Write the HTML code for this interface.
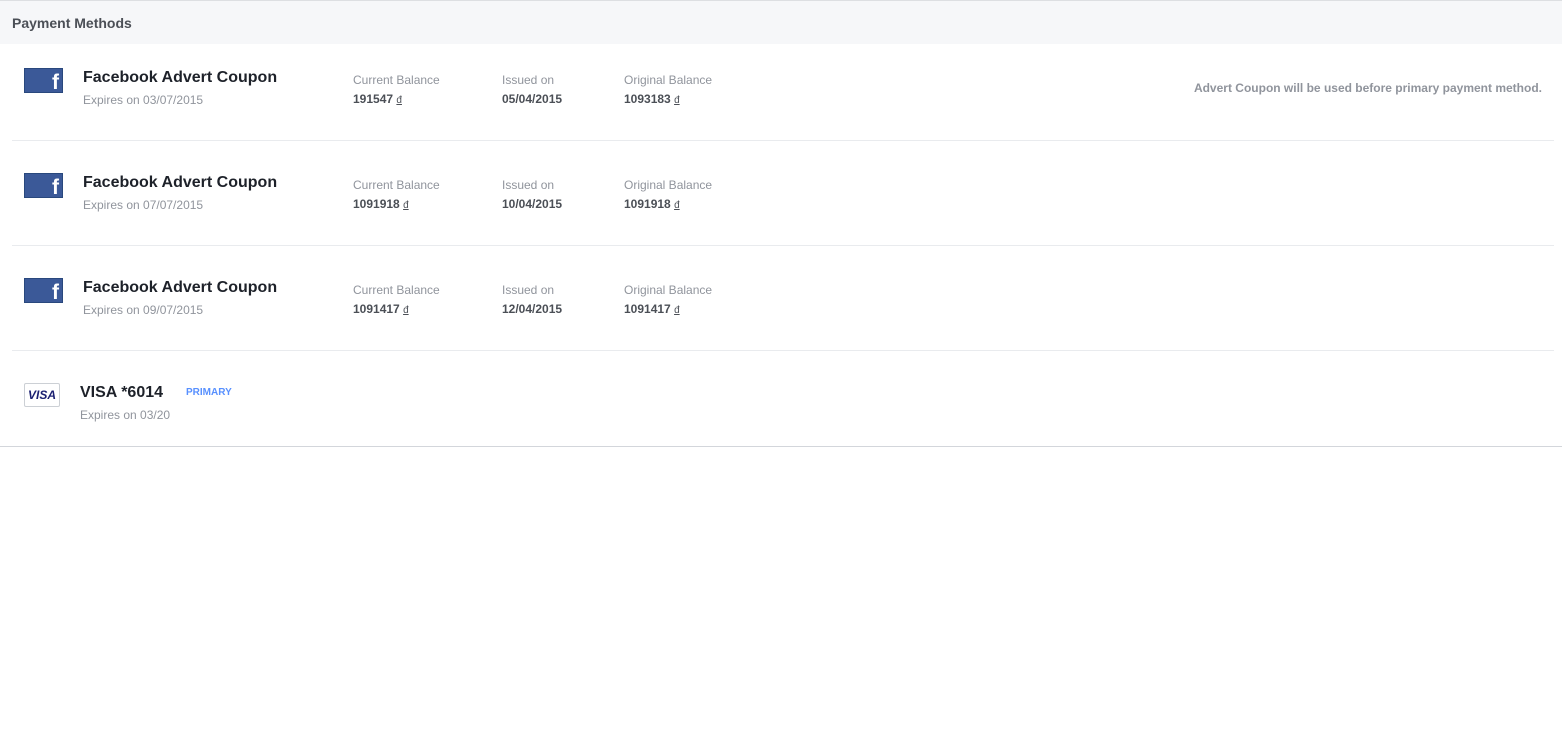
<!DOCTYPE html>
<html><head><meta charset="utf-8"><style>
body{margin:0;width:1562px;height:750px;background:#fff;font-family:"Liberation Sans",Arial,sans-serif;position:relative;overflow:hidden}
.hdr{position:absolute;left:0;top:0;width:1562px;height:43px;background:#f6f7f9;border-top:1px solid #dddfe2}
.hdr span{position:absolute;left:12px;top:14px;font-size:14px;font-weight:bold;color:#4b4f56}
.a{position:absolute;white-space:nowrap}
.t{font-size:16px;font-weight:bold;color:#1d2129}
.e{font-size:12px;color:#90949c}
.l{font-size:12px;color:#90949c}
.v{font-size:12px;font-weight:bold;color:#4b4f56}
.v u{text-decoration:underline;font-weight:normal;font-size:10px}
.sep{position:absolute;left:12px;width:1542px;height:1px;background:#e9ebee}
.fb{position:absolute;left:24px;width:37px;height:23px;background:#3b5998;border:1px solid #29487d}
.fb span{position:absolute;right:3px;bottom:-3px;color:#fff;font-weight:bold;font-size:21px;font-family:"Liberation Sans",sans-serif}
</style></head><body>
<div class="hdr"><span>Payment Methods</span></div>

<div class="fb" style="top:68px"><span>f</span></div>
<div class="a t" style="left:83px;top:69px">Facebook Advert Coupon</div>
<div class="a e" style="left:83px;top:93px">Expires on 03/07/2015</div>
<div class="a l" style="left:353px;top:73px">Current Balance</div>
<div class="a v" style="left:353px;top:92px">191547 <u>đ</u></div>
<div class="a l" style="left:502px;top:73px">Issued on</div>
<div class="a v" style="left:502px;top:92px">05/04/2015</div>
<div class="a l" style="left:624px;top:73px">Original Balance</div>
<div class="a v" style="left:624px;top:92px">1093183 <u>đ</u></div>
<div class="a" style="right:20px;top:81px;font-size:12px;font-weight:bold;color:#90949c">Advert Coupon will be used before primary payment method.</div>
<div class="sep" style="top:140px"></div>

<div class="fb" style="top:173px"><span>f</span></div>
<div class="a t" style="left:83px;top:174px">Facebook Advert Coupon</div>
<div class="a e" style="left:83px;top:198px">Expires on 07/07/2015</div>
<div class="a l" style="left:353px;top:178px">Current Balance</div>
<div class="a v" style="left:353px;top:197px">1091918 <u>đ</u></div>
<div class="a l" style="left:502px;top:178px">Issued on</div>
<div class="a v" style="left:502px;top:197px">10/04/2015</div>
<div class="a l" style="left:624px;top:178px">Original Balance</div>
<div class="a v" style="left:624px;top:197px">1091918 <u>đ</u></div>
<div class="sep" style="top:245px"></div>

<div class="fb" style="top:278px"><span>f</span></div>
<div class="a t" style="left:83px;top:279px">Facebook Advert Coupon</div>
<div class="a e" style="left:83px;top:303px">Expires on 09/07/2015</div>
<div class="a l" style="left:353px;top:283px">Current Balance</div>
<div class="a v" style="left:353px;top:302px">1091417 <u>đ</u></div>
<div class="a l" style="left:502px;top:283px">Issued on</div>
<div class="a v" style="left:502px;top:302px">12/04/2015</div>
<div class="a l" style="left:624px;top:283px">Original Balance</div>
<div class="a v" style="left:624px;top:302px">1091417 <u>đ</u></div>
<div class="sep" style="top:350px"></div>

<div class="a" style="left:24px;top:383px;width:34px;height:22px;border:1px solid #ccd0d5;border-radius:2px;background:#fff;text-align:center;line-height:22px;font-size:12px;font-weight:bold;font-style:italic;color:#1a1f71">VISA</div>
<div class="a t" style="left:80px;top:384px">VISA *6014</div>
<div class="a" style="left:186px;top:387px;font-size:10px;font-weight:bold;color:#5890ff">PRIMARY</div>
<div class="a e" style="left:80px;top:408px">Expires on 03/20</div>
<div class="a" style="left:0;top:446px;width:1562px;height:1px;background:#d3d6db"></div>
</body></html>
